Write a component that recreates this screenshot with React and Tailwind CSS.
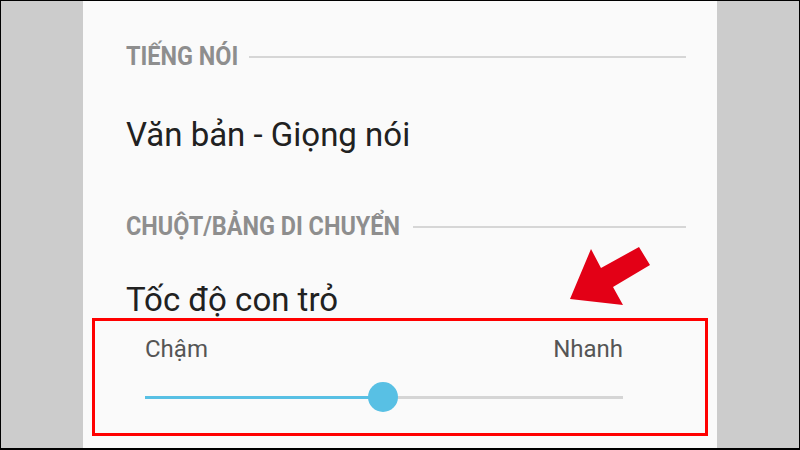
export default function App() {
  const value = 49.8;

  return (
    <div className="relative h-[450px] w-[800px] overflow-hidden bg-black pt-px pr-px pb-[2px] pl-px font-['Roboto',sans-serif]">
      <div className="flex h-full w-full">
        <div className="w-[82px] shrink-0 bg-[#cccccc]" />

        <div className="flex-1 bg-[#fafafa] pt-[36px] pr-[31px] pl-[43px]">
          {/* Tiếng nói */}
          <div className="flex h-10 items-center gap-[11px]">
            <div className="w-[112px] shrink-0 whitespace-nowrap">
              <span className="inline-block origin-left scale-x-[0.9] text-[26px] font-bold leading-none text-[#8e8e8e]">
                TIẾNG NÓI
              </span>
            </div>
            <div className="h-[2px] flex-1 bg-[#d6d6d6]" />
          </div>

          <div className="mt-[29px] flex h-[56px] items-center">
            <span className="text-[33px] leading-none text-[#212121]">Văn bản - Giọng nói</span>
          </div>

          {/* Chuột/bảng di chuyển */}
          <div className="mt-[45px] flex h-10 items-center gap-[13px]">
            <div className="w-[274px] shrink-0 whitespace-nowrap">
              <span className="inline-block origin-left scale-x-[0.9] text-[26px] font-bold leading-none text-[#8e8e8e]">
                CHUỘT/BẢNG DI CHUYỂN
              </span>
            </div>
            <div className="h-[2px] flex-1 bg-[#d6d6d6]" />
          </div>

          <div className="mt-[24px] flex h-[56px] items-center">
            <span className="text-[33px] leading-none text-[#212121]">Tốc độ con trỏ</span>
          </div>

          {/* slider */}
          <div className="ml-[19px] w-[478px]">
            <div className="mt-[7px] flex h-[30px] items-center justify-between text-[24px] leading-none text-[#555555]">
              <span>Chậm</span>
              <span>Nhanh</span>
            </div>
            <div className="relative mt-[18px] flex h-[30px] items-center">
              <div className="h-[3px] w-full bg-[#d5d5d5]">
                <div className="h-full bg-[#58c0e4]" style={{ width: value + "%" }} />
              </div>
              <div
                className="absolute top-0 h-[30px] w-[30px] -translate-x-1/2 rounded-full bg-[#58c0e4]"
                style={{ left: value + "%" }}
              />
            </div>
          </div>
        </div>

        <div className="w-[82px] shrink-0 bg-[#cccccc]" />
      </div>

      {/* annotation */}
      <div className="absolute top-[318px] left-[92px] h-[118px] w-[616px] border-[3px] border-[#ff0000]" />
      <svg className="absolute top-0 left-0" width="800" height="450" viewBox="0 0 800 450">
        <polygon
          points="570,299 591,249 601,268 639,247 650,265 613,287 623,305"
          fill="#e30016"
        />
      </svg>
    </div>
  );
}
